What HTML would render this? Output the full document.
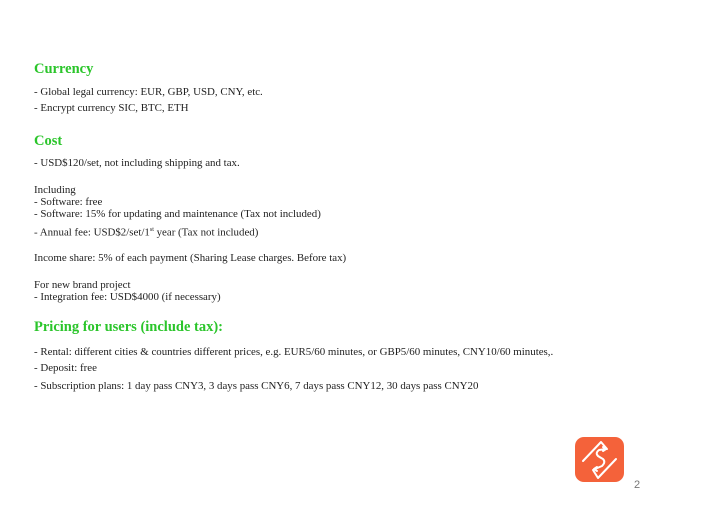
<html><head><style>
body{margin:0;width:720px;height:508px;background:#fff;position:relative;font-family:"Liberation Serif",serif;color:#222;overflow:hidden}
.t{position:absolute;left:34px;font-size:10.9px;white-space:nowrap;line-height:12px}
.h{position:absolute;left:34px;font-size:14.5px;font-weight:bold;color:#2bc52b;line-height:16px;white-space:nowrap}
</style></head><body>
<div class="h" style="top:61px">Currency</div>
<div class="t" style="top:86px">- Global legal currency: EUR, GBP, USD, CNY, etc.</div>
<div class="t" style="top:102px">- Encrypt currency SIC, BTC, ETH</div>
<div class="h" style="top:133px">Cost</div>
<div class="t" style="top:157px">- USD$120/set, not including shipping and tax.</div>
<div class="t" style="top:184px">Including</div>
<div class="t" style="top:196px">- Software: free</div>
<div class="t" style="top:208px">- Software: 15% for updating and maintenance (Tax not included)</div>
<div class="t" style="top:224px">- Annual fee: USD$2/set/1<sup style="font-size:6px">st</sup> year (Tax not included)</div>
<div class="t" style="top:252px">Income share: 5% of each payment (Sharing Lease charges. Before tax)</div>
<div class="t" style="top:279px">For new brand project</div>
<div class="t" style="top:291px">- Integration fee: USD$4000 (if necessary)</div>
<div class="h" style="top:319px">Pricing for users (include tax):</div>
<div class="t" style="top:346px">- Rental: different cities &amp; countries different prices, e.g. EUR5/60 minutes, or GBP5/60 minutes, CNY10/60 minutes,.</div>
<div class="t" style="top:362px">- Deposit: free</div>
<div class="t" style="top:380px">- Subscription plans: 1 day pass CNY3, 3 days pass CNY6, 7 days pass CNY12, 30 days pass CNY20</div>
<svg style="position:absolute;left:575px;top:437px" width="49" height="45" viewBox="0 0 49 45">
<rect width="49" height="45" rx="9" fill="#f4623a"/>
<g fill="none" stroke="#fff" stroke-width="2" stroke-linecap="round" stroke-linejoin="round">
<path d="M8 24 L26 5 L32 12"/>
<path d="M28 14 L31 12 L28 10"/>
<path d="M31 12 L24 13 Q20 16 23 19 Q26 21 28 22 Q31 25 27 29 L20 32"/>
<path d="M22 30 L19 32 L22 34"/>
<path d="M18 33 L23 41 L41 22"/>
</g></svg>
<div style="position:absolute;left:634px;top:479px;font-family:'Liberation Sans',sans-serif;font-size:11px;color:#777">2</div>
</body></html>
